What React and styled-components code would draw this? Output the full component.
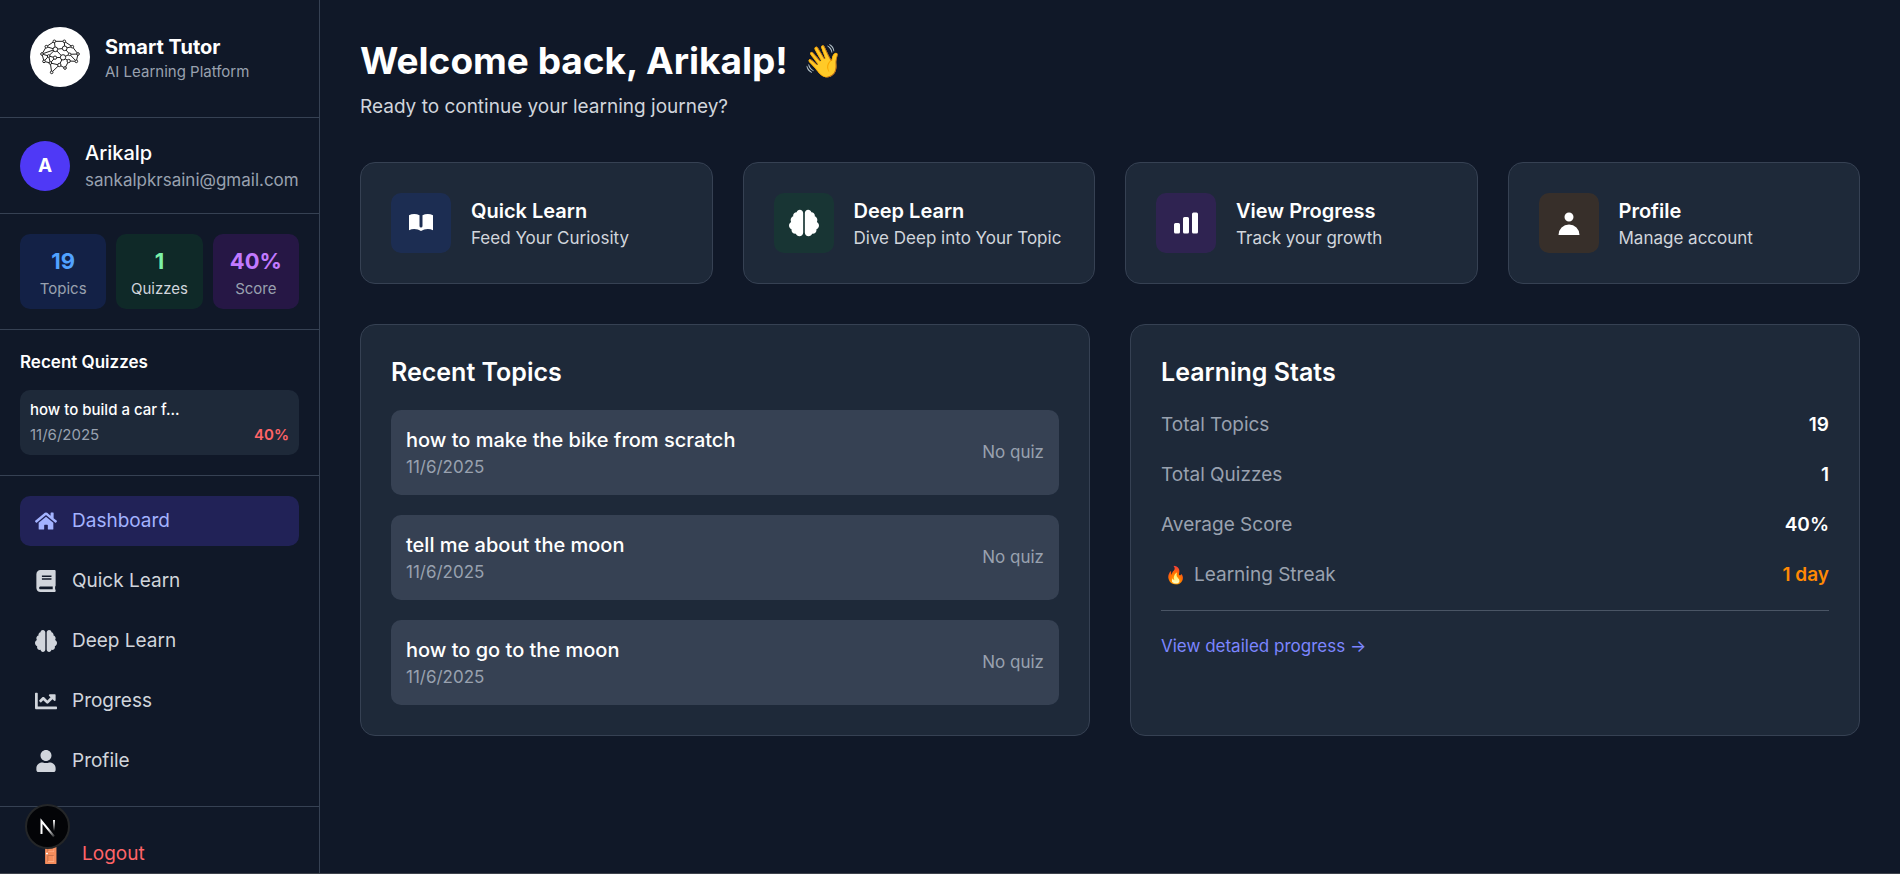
import React from 'react';

import styled, { createGlobalStyle } from 'styled-components';
import { FaHome, FaBook, FaChartLine, FaUser, FaBrain } from 'react-icons/fa';
import { FaBrain as FaBrainRound } from 'react-icons/fa6';
import { HiBookOpen, HiChartBar, HiUser } from 'react-icons/hi';

const GlobalStyle = createGlobalStyle`
*{
    box-sizing: border-box;
}
body{
    margin: 0;
    background: #101828;
    color: #fff;
    font-family: Inter, 'Liberation Sans', sans-serif;
    font-size: 19px;
    line-height: 30px;
    overflow: hidden;
}
h1, h2, h3, p, ul, dl, dd{
    margin: 0;
    padding: 0;
}
a{
    text-decoration: none;
}
`

const Page = styled.div`
height: 100vh;
display: flex;
overflow: hidden;
border-bottom: 1px solid #3d424b;
`

const Sidebar = styled.aside`
width: 320px;
flex-shrink: 0;
border-right: 1px solid #364153;
`

const Section = styled.div`
padding: 20px;
border-bottom: 1px solid #364153;
`

const Brand = styled.div`
display: flex;
align-items: center;
gap: 15px;
padding: 27px 30px 30px;
border-bottom: 1px solid #364153;

svg{
    width: 60px;
    height: 60px;
    border-radius: 50%;
    background: #fff;
}
h1{
    font-size: 20px;
    font-weight: 700;
    line-height: 30px;
}
p{
    font-size: 15px;
    line-height: 20px;
    color: #99a1af;
}
`

const User = styled(Section)`
display: flex;
align-items: center;
gap: 15px;
`

const Avatar = styled.div`
width: 50px;
height: 50px;
border-radius: 50%;
background: #4f39f6;
font-weight: 700;
line-height: 50px;
text-align: center;
`

const Name = styled.p`
font-size: 20px;
font-weight: ${props => props.$bold ? 600 : 500};
line-height: 30px;
`

const Detail = styled.p`
font-size: 17px;
line-height: 25px;
color: ${props => props.$light ? '#d1d5dc' : '#99a1af'};
`

const Tiles = styled(Section)`
display: grid;
grid-template-columns: repeat(3, 1fr);
gap: 10px;
`

const Tile = styled.div`
padding: 10px 0;
border-radius: 10px;
background: ${props => props.$bg};
text-align: center;

strong{
    display: block;
    font-size: 22px;
    line-height: 35px;
    color: ${props => props.$color};
}
span{
    display: block;
    font-size: 15px;
    line-height: 20px;
    color: ${props => props.$label || '#99a1af'};
}
`

const SmallTitle = styled.h3`
font-size: 17px;
font-weight: 600;
line-height: 25px;
margin-bottom: 15px;
`

const Quiz = styled.div`
padding: 10px;
border-radius: 10px;
background: #1e2939;
font-size: 15px;
line-height: 20px;

p{
    font-weight: 500;
    margin-bottom: 5px;
}
div{
    display: flex;
    justify-content: space-between;
    color: #99a1af;
}
strong{
    font-weight: 600;
    color: #ff6467;
}
`

const Nav = styled.nav`
display: flex;
flex-direction: column;
gap: 10px;
padding: 20px;
border-bottom: 1px solid #364153;
`

const NavLink = styled.a`
display: flex;
align-items: center;
gap: 15px;
height: 50px;
padding: 0 15px;
border-radius: 10px;
background: ${props => props.$active ? 'rgba(49, 44, 133, 0.5)' : 'transparent'};
color: ${props => props.$active ? '#a3b3ff' : '#d1d5dc'};

svg{
    width: 22px;
    height: 22px;
}
`

const Logout = styled.button`
display: flex;
align-items: center;
gap: 15px;
margin: 22px 20px 20px;
padding: 10px 15px;
border: 0;
background: none;
color: #ff6467;
font: inherit;

span{
    width: 32px;
    text-align: center;
    filter: brightness(1.4);
}
`

const DevBadge = styled.button`
position: fixed;
left: 25px;
bottom: 25px;
width: 45px;
height: 45px;
padding: 0;
border: 2px solid #242628;
border-radius: 50%;
background: #030407;

svg{
    display: block;
    width: 100%;
}
`

const Main = styled.main`
flex: 1;
padding: 40px;
`

const Welcome = styled.header`
margin-bottom: 40px;

h2{
    display: flex;
    gap: 15px;
    font-size: 37px;
    font-weight: 700;
    line-height: 42px;
    margin-bottom: 10px;
}
h2 span{
    font-size: 32px;
}
p{
    color: #d1d5dc;
}
`

const Cards = styled.div`
display: grid;
grid-template-columns: repeat(4, 1fr);
gap: 30px;
margin-bottom: 40px;
`

const Card = styled.a`
display: flex;
align-items: center;
gap: 20px;
padding: 30px;
border: 1px solid #364153;
border-radius: 15px;
background: #1e2939;
color: #fff;
`

const IconBox = styled.div`
display: grid;
place-items: center;
width: 60px;
height: 60px;
flex-shrink: 0;
border-radius: 10px;
background: ${props => props.$bg};

svg{
    width: 30px;
    height: 30px;
}
`

const Panels = styled.div`
display: grid;
grid-template-columns: 1fr 1fr;
gap: 40px;
`

const Panel = styled.section`
padding: 30px;
border: 1px solid #364153;
border-radius: 15px;
background: #1e2939;

h3{
    font-size: 25px;
    font-weight: 600;
    line-height: 35px;
    margin-bottom: 20px;
}
`

const Topics = styled.ul`
display: grid;
gap: 20px;
list-style: none;
`

const Topic = styled.li`
display: flex;
align-items: center;
justify-content: space-between;
padding: 15px;
border-radius: 10px;
background: #364153;
`

const Stats = styled.dl`
display: grid;
gap: 20px;
padding-bottom: 20px;
border-bottom: 1px solid #4a5565;
margin-bottom: 20px;
`

const Stat = styled.div`
display: flex;
justify-content: space-between;

dt{
    display: flex;
    gap: 5px;
    color: #99a1af;
}
dt span{
    width: 28px;
    font-size: 17px;
    text-align: center;
}
dd{
    font-weight: 600;
    color: ${props => props.$color || '#fff'};
}
`

const MoreLink = styled.a`
font-size: 17px;
color: #7c86ff;
`

const nodes = [
    [61, 22, 4], [91, 22, 4], [37, 38, 4], [115, 38, 4], [24, 60, 4], [132, 60, 4],
    [64, 46, 7], [92, 43, 7], [44, 66, 4], [63, 71, 5], [87, 70, 8], [107, 61, 4],
    [30, 82, 4], [49, 87, 4], [76, 93, 5], [104, 81, 5], [127, 82, 4], [53, 115, 4], [93, 102, 4],
]

// pairs of indexes into nodes
const edges = [
    [0, 1], [0, 2], [0, 6], [1, 7], [1, 3], [2, 4], [2, 6], [3, 5], [3, 7], [4, 8], [4, 12], [6, 8],
    [6, 10], [6, 7], [7, 11], [8, 9], [9, 10], [10, 11], [11, 5], [8, 13], [12, 13], [9, 13], [10, 14],
    [10, 15], [15, 16], [5, 16], [13, 14], [13, 17], [14, 17], [14, 18], [15, 18], [4, 6], [11, 16], [12, 8],
]

function Logo(){
return (
    <svg viewBox="-12 -21 180 180" stroke="#222" strokeWidth="3" fill="#fff" aria-hidden="true">
        {edges.map(([a, b]) => (
            <line key={a + '-' + b} x1={nodes[a][0]} y1={nodes[a][1]} x2={nodes[b][0]} y2={nodes[b][1]} />
        ))}
        {nodes.map(([x, y, r]) => <circle key={x + '-' + y} cx={x} cy={y} r={r} />)}
    </svg>
)
}

const links = [
    ['Dashboard', FaHome],
    ['Quick Learn', FaBook],
    ['Deep Learn', FaBrainRound],
    ['Progress', FaChartLine],
    ['Profile', FaUser],
]

const cards = [
    ['Quick Learn', 'Feed Your Curiosity', HiBookOpen, 'rgba(28, 57, 142, 0.3)'],
    ['Deep Learn', 'Dive Deep into Your Topic', FaBrain, 'rgba(13, 84, 43, 0.3)'],
    ['View Progress', 'Track your growth', HiChartBar, 'rgba(89, 22, 139, 0.3)'],
    ['Profile', 'Manage account', HiUser, 'rgba(115, 62, 10, 0.3)'],
]

const topics = ['how to make the bike from scratch', 'tell me about the moon', 'how to go to the moon']

function App(){
return (
    <Page>
        <GlobalStyle />
        <Sidebar>
            <Brand>
                <Logo />
                <div>
                    <h1>Smart Tutor</h1>
                    <p>AI Learning Platform</p>
                </div>
            </Brand>

            <User>
                <Avatar>A</Avatar>
                <div>
                    <Name>Arikalp</Name>
                    <Detail>sankalpkrsaini@gmail.com</Detail>
                </div>
            </User>

            <Tiles>
                <Tile $bg="rgba(28, 57, 142, 0.3)" $color="#51a2ff"><strong>19</strong><span>Topics</span></Tile>
                <Tile $bg="rgba(13, 84, 43, 0.3)" $color="#7bf1a8" $label="#d1d5dc"><strong>1</strong><span>Quizzes</span></Tile>
                <Tile $bg="rgba(89, 22, 139, 0.3)" $color="#c27aff"><strong>40%</strong><span>Score</span></Tile>
            </Tiles>

            <Section>
                <SmallTitle>Recent Quizzes</SmallTitle>
                <Quiz>
                    <p>how to build a car f...</p>
                    <div><span>11/6/2025</span><strong>40%</strong></div>
                </Quiz>
            </Section>

            <Nav>
                {links.map(([label, Icon], i) => (
                    <NavLink key={label} href="#" $active={i === 0}><Icon />{label}</NavLink>
                ))}
            </Nav>

            <Logout type="button"><span>🚪</span>Logout</Logout>
        </Sidebar>

        <Main>
            <Welcome>
                <h2>Welcome back, Arikalp! <span>👋</span></h2>
                <p>Ready to continue your learning journey?</p>
            </Welcome>

            <Cards>
                {cards.map(([title, text, Icon, bg]) => (
                    <Card key={title} href="#">
                        <IconBox $bg={bg}><Icon /></IconBox>
                        <div>
                            <Name $bold>{title}</Name>
                            <Detail $light>{text}</Detail>
                        </div>
                    </Card>
                ))}
            </Cards>

            <Panels>
                <Panel>
                    <h3>Recent Topics</h3>
                    <Topics>
                        {topics.map(topic => (
                            <Topic key={topic}>
                                <div>
                                    <Name>{topic}</Name>
                                    <Detail>11/6/2025</Detail>
                                </div>
                                <Detail>No quiz</Detail>
                            </Topic>
                        ))}
                    </Topics>
                </Panel>

                <Panel>
                    <h3>Learning Stats</h3>
                    <Stats>
                        <Stat><dt>Total Topics</dt><dd>19</dd></Stat>
                        <Stat><dt>Total Quizzes</dt><dd>1</dd></Stat>
                        <Stat><dt>Average Score</dt><dd>40%</dd></Stat>
                        <Stat $color="#ff8904"><dt><span>🔥</span> Learning Streak</dt><dd>1 day</dd></Stat>
                    </Stats>
                    <MoreLink href="#">View detailed progress →</MoreLink>
                </Panel>
            </Panels>
        </Main>

        <DevBadge type="button" aria-label="Open developer tools">
            <svg viewBox="0 0 41 41" fill="none" strokeWidth="2">
                <defs>
                    <linearGradient id="stem" x1="0" y1="14" x2="0" y2="25" gradientUnits="userSpaceOnUse">
                        <stop stopColor="#fff" />
                        <stop offset="1" stopColor="#fff" stopOpacity="0" />
                    </linearGradient>
                    <linearGradient id="slash" x1="22" y1="22" x2="28" y2="31" gradientUnits="userSpaceOnUse">
                        <stop stopColor="#fff" />
                        <stop offset="1" stopColor="#fff" stopOpacity="0.1" />
                    </linearGradient>
                </defs>
                <path d="M27 14V25.500" stroke="url(#stem)" />
                <path d="M14.500 28V15L27 30.500" stroke="url(#slash)" />
            </svg>
        </DevBadge>
    </Page>
)
}

export default App
